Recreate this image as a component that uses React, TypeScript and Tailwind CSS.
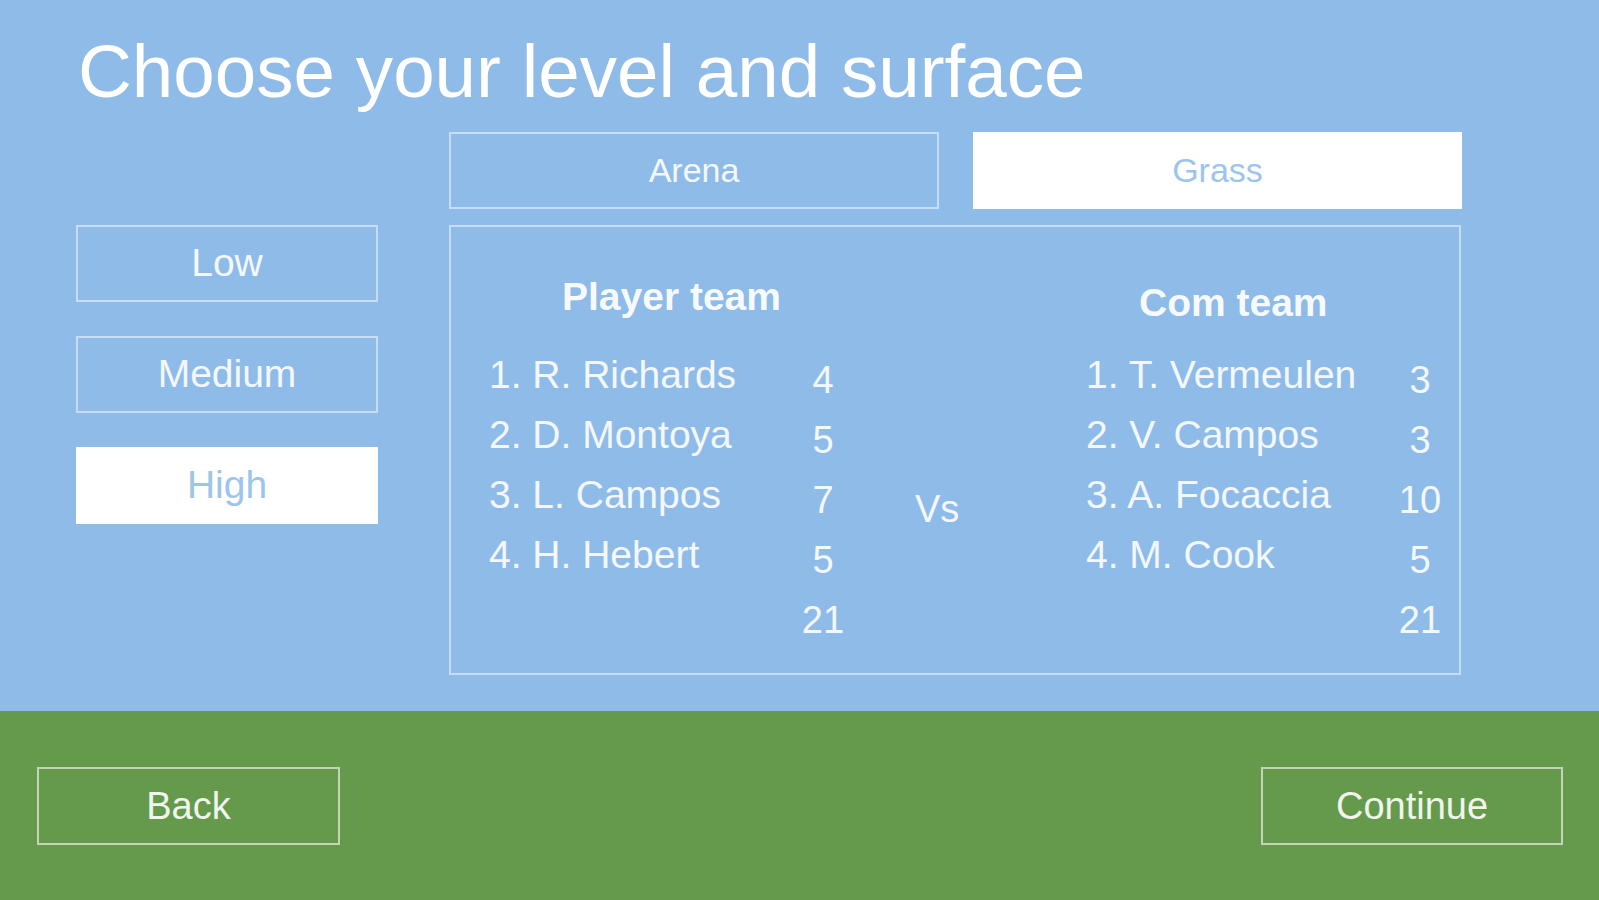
import React from 'react';

const players = [
  { name: '1. R. Richards', score: 4 },
  { name: '2. D. Montoya', score: 5 },
  { name: '3. L. Campos', score: 7 },
  { name: '4. H. Hebert', score: 5 },
];

const coms = [
  { name: '1. T. Vermeulen', score: 3 },
  { name: '2. V. Campos', score: 3 },
  { name: '3. A. Focaccia', score: 10 },
  { name: '4. M. Cook', score: 5 },
];

type Member = { name: string; score: number };

function TeamTable({ title, members, headerClass }: { title: string; members: Member[]; headerClass: string }) {
  const total = members.reduce((sum, m) => sum + m.score, 0);
  return (
    <div className="flex flex-col">
      {/* Team heading */}
      <div className={`text-[39px] leading-none font-bold text-white/95 whitespace-nowrap ${headerClass}`}>{title}</div>
      <div className="grid grid-cols-[304px_60px]">
        <div className="flex flex-col">
          {members.map((m) => (
            <div key={m.name} className="h-[60px] leading-[60px] text-[39px] text-white/90 whitespace-nowrap">
              {m.name}
            </div>
          ))}
        </div>
        <div className="flex flex-col pt-[5px] text-center">
          {members.map((m) => (
            <div key={m.name} className="h-[60px] leading-[60px] text-[38px] text-white/90">
              {m.score}
            </div>
          ))}
          <div className="h-[60px] leading-[60px] text-[38px] text-white/90">{total}</div>
        </div>
      </div>
    </div>
  );
}

export default function App() {
  const levels = ['Low', 'Medium', 'High'];
  const selectedLevel = 'High';
  const surfaces = ['Arena', 'Grass'];
  const selectedSurface = 'Grass';

  return (
    <div className="w-full h-[900px] flex flex-col overflow-hidden" style={{ fontFamily: '"Liberation Sans", Arial, sans-serif' }}>
      {/* Sky area */}
      <div className="h-[711px] bg-[#8ebbe8] flex flex-col">
        <h1 className="pl-[78px] pt-[34px] text-[74.6px] leading-[74px] font-normal text-white whitespace-nowrap">
          Choose your level and surface
        </h1>

        <div className="mt-[24px] ml-[76px] grid grid-cols-[302px_1013px] gap-x-[71px] gap-y-[16px]">
          <div />
          {/* Surface tabs */}
          <div className="grid grid-cols-[490px_489px] gap-x-[34px]">
            {surfaces.map((s) => (
              <button
                key={s}
                className={`h-[77px] text-[34px] ${
                  s === selectedSurface
                    ? 'bg-white text-[#9cc5ee]'
                    : 'border-2 border-white/50 text-white/90'
                }`}
              >
                {s}
              </button>
            ))}
          </div>

          {/* Level buttons */}
          <div className="flex flex-col gap-[34px]">
            {levels.map((l) => (
              <button
                key={l}
                className={`h-[77px] text-[39px] ${
                  l === selectedLevel
                    ? 'bg-white text-[#9cc5ee]'
                    : 'border-2 border-white/50 text-white/90'
                }`}
              >
                {l}
              </button>
            ))}
          </div>

          {/* Teams panel */}
          <div className="w-[1012px] h-[450px] border-2 border-white/50 flex items-start pl-[38px] pt-[50px]">
            <TeamTable title="Player team" members={players} headerClass="ml-[73px] mb-[29px]" />
            <div className="ml-[62px] pt-[202px] text-[38px] text-white/90 w-[44px]">
              <div className="leading-[60px]">Vs</div>
            </div>
            <div className="ml-[127px]">
              <TeamTable title="Com team" members={coms} headerClass="ml-[53px] pt-[6px] mb-[23px]" />
            </div>
          </div>
        </div>
      </div>

      {/* Grass area */}
      <div className="flex-1 bg-[#65994b] flex items-start justify-between pl-[37px] pr-[36px] pt-[56px]">
        <button className="w-[303px] h-[78px] border-2 border-white/60 text-[38px] text-white/90">Back</button>
        <button className="w-[302px] h-[78px] border-2 border-white/60 text-[38px] text-white/90">Continue</button>
      </div>
    </div>
  );
}
